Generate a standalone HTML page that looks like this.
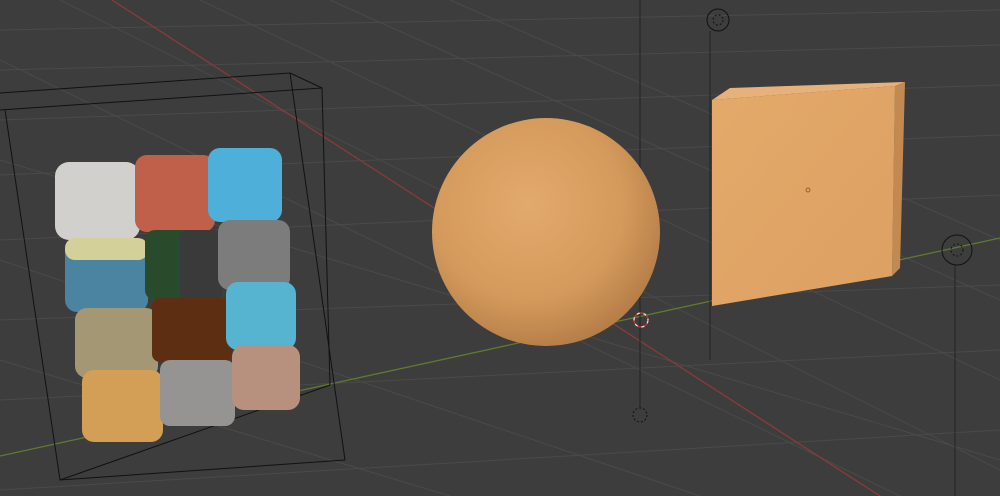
<!DOCTYPE html>
<html><head><meta charset="utf-8"><style>
html,body{margin:0;padding:0;background:#3d3d3d;width:1000px;height:496px;overflow:hidden}
</style></head><body>
<svg width="1000" height="496" viewBox="0 0 1000 496" xmlns="http://www.w3.org/2000/svg">
<defs>
<radialGradient id="sph" cx="0.42" cy="0.38" r="0.7">
<stop offset="0" stop-color="#e2aa6c"/><stop offset="0.6" stop-color="#d49a5c"/><stop offset="1" stop-color="#ad7642"/>
</radialGradient>
<linearGradient id="face" x1="0" y1="0" x2="1" y2="1">
<stop offset="0" stop-color="#e3aa6a"/><stop offset="1" stop-color="#dca062"/>
</linearGradient>
</defs>
<rect width="1000" height="496" fill="#3d3d3d"/>
<g stroke="#4a4a4a" stroke-width="1">
<line x1="0" y1="30" x2="1000" y2="10"/>
<line x1="0" y1="70" x2="1000" y2="45"/>
<line x1="0" y1="120" x2="1000" y2="85"/>
<line x1="0" y1="175" x2="1000" y2="135"/>
<line x1="0" y1="240" x2="1000" y2="195"/>
<line x1="0" y1="320" x2="1000" y2="285"/>
<line x1="0" y1="400" x2="1000" y2="350"/>
<line x1="0" y1="490" x2="1000" y2="430"/>
<line x1="0" y1="160" x2="1000" y2="460"/>
<line x1="200" y1="0" x2="1000" y2="380"/>
<line x1="330" y1="0" x2="1000" y2="300"/>
<line x1="450" y1="0" x2="1000" y2="240"/>
<line x1="0" y1="260" x2="700" y2="496"/>
<line x1="0" y1="360" x2="450" y2="496"/>
<line x1="0" y1="60" x2="900" y2="496"/>
<line x1="60" y1="0" x2="1000" y2="470"/>
</g>
<line x1="112" y1="0" x2="880" y2="496" stroke="#8a3a3a" stroke-width="1.3"/>
<line x1="0" y1="456" x2="1000" y2="238" stroke="#5f7a2e" stroke-width="1.3"/>
<g stroke="#111" stroke-width="1" fill="none">
<polyline points="0,93 290,73 345,460"/>
<polyline points="0,110 322,88 330,385"/>
<line x1="290" y1="73" x2="322" y2="88"/>
<polyline points="5,110 60,480 345,460"/>
<line x1="60" y1="480" x2="330" y2="385"/>
<g stroke="#222">
<line x1="640" y1="0" x2="640" y2="408"/>
<line x1="710" y1="31" x2="710" y2="360"/>
<line x1="955" y1="265" x2="955" y2="496"/>
</g>
</g>
<!-- cubes -->
<g>
<rect x="55" y="162" width="85" height="78" rx="14" fill="#d2d0cc"/>
<rect x="135" y="155" width="80" height="77" rx="12" fill="#c0604a"/>
<rect x="208" y="148" width="74" height="74" rx="12" fill="#4eb0d8"/>
<rect x="65" y="238" width="83" height="74" rx="12" fill="#4a84a0"/>
<rect x="65" y="238" width="83" height="22" rx="10" fill="#d4d09a"/>
<rect x="145" y="230" width="77" height="70" rx="10" fill="#2a4a2c"/>
<rect x="180" y="230" width="42" height="70" rx="8" fill="#3a3a3a"/>
<rect x="218" y="220" width="72" height="70" rx="12" fill="#7c7c7c"/>
<rect x="75" y="308" width="83" height="70" rx="12" fill="#a49874"/>
<rect x="152" y="298" width="80" height="64" rx="8" fill="#5e2e12"/>
<rect x="226" y="282" width="70" height="68" rx="12" fill="#56b4d0"/>
<rect x="82" y="370" width="81" height="72" rx="12" fill="#d39e55"/>
<rect x="160" y="360" width="75" height="66" rx="10" fill="#969492"/>
<rect x="232" y="345" width="68" height="65" rx="12" fill="#b8907e"/>
</g>
<!-- sphere -->
<ellipse cx="546" cy="232" rx="114" ry="114" fill="url(#sph)"/>
<!-- box -->
<polygon points="712,100 730,88 905,82 895,86" fill="#e6b27a"/>
<polygon points="895,86 905,82 900,268 892,276" fill="#c28a50"/>
<polygon points="712,100 895,86 892,276 712,306" fill="url(#face)"/>
<circle cx="808" cy="190" r="2" fill="none" stroke="#a0601a"/>
<!-- empties -->
<g fill="none" stroke="#111" stroke-width="1">
<circle cx="718" cy="20" r="11"/><circle cx="718" cy="20" r="5" stroke-dasharray="2 2"/>
<circle cx="957" cy="250" r="15"/><circle cx="957" cy="250" r="6" stroke-dasharray="2 2"/>
<circle cx="640" cy="415" r="7" stroke-dasharray="2 2"/>
</g>
<circle cx="641" cy="320" r="7" fill="none" stroke="#e6e6e6" stroke-width="1.3" stroke-dasharray="4 3"/>
<circle cx="641" cy="320" r="7" fill="none" stroke="#c33" stroke-width="1.3" stroke-dasharray="4 3" stroke-dashoffset="3.5"/>
</svg>
</body></html>
